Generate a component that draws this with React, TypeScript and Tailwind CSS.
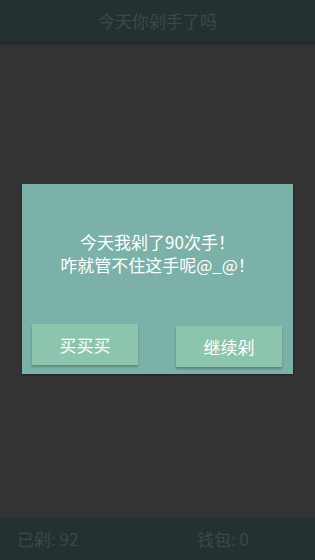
export default function App() {
  const font = { fontFamily: '"Noto Sans CJK SC", "Noto Sans", sans-serif' };

  return (
    <div className="flex flex-col w-[315px] h-[560px] bg-[#333333]" style={font}>
      {/* Title bar */}
      <div className="h-[42px] shrink-0 bg-[#233230] flex items-center justify-center shadow-[0_2px_3px_rgba(0,0,0,0.35)]">
        <span className="text-[17px] text-[#3a4a48]">今天你剁手了吗</span>
      </div>

      {/* Body */}
      <div className="flex-1 flex items-center">
        <div className="ml-[22px] w-[271px] h-[190px] bg-[#7bb1a8] flex flex-col mt-[-2px] shadow-[0_1px_2px_rgba(0,0,0,0.4)]">
          <div className="pt-[46px] text-center text-white text-[17px] leading-[23px]">
            <p>今天我剁了90次手！</p>
            <p>咋就管不住这手呢@_@！</p>
          </div>
          <div className="flex justify-between px-[10px] mt-[48px]">
            <button className="w-[106px] h-[41px] bg-[#8cc4ad] text-white text-[17px] shadow-[0_2px_2px_rgba(0,0,0,0.25)]">
              买买买
            </button>
            <button className="w-[106px] h-[41px] mt-[2px] mr-[1px] bg-[#8cc4ad] text-white text-[17px] shadow-[0_2px_2px_rgba(0,0,0,0.25)]">
              继续剁
            </button>
          </div>
        </div>
      </div>

      {/* Status bar */}
      <div className="h-[42px] shrink-0 bg-[#233230] flex items-center pl-[17px] text-[17px] text-[#3a4a48]">
        <span className="w-[180px]">已剁: 92</span>
        <span>钱包: 0</span>
      </div>
    </div>
  );
}
